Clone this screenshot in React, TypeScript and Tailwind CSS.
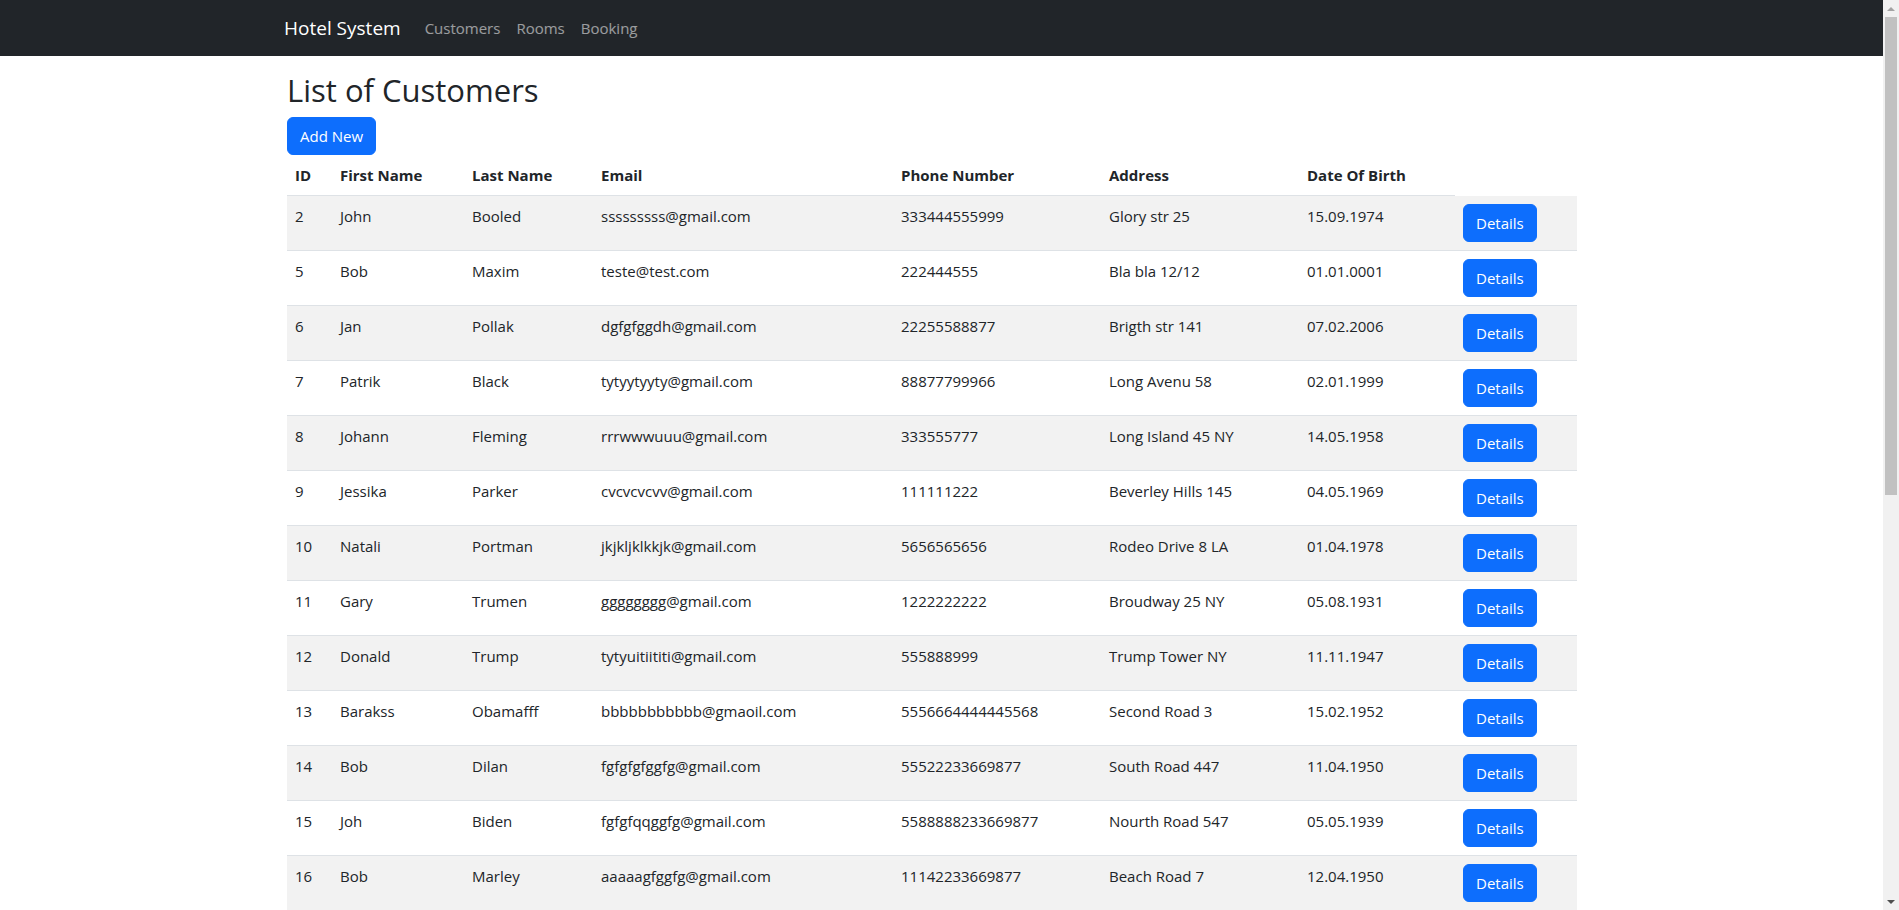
import React from 'react'

type Customer = {
  id: number
  firstName: string
  lastName: string
  email: string
  phone: string
  address: string
  dob: string
}

const customers: Customer[] = [
  { id: 2, firstName: 'John', lastName: 'Booled', email: 'sssssssss@gmail.com', phone: '333444555999', address: 'Glory str 25', dob: '15.09.1974' },
  { id: 5, firstName: 'Bob', lastName: 'Maxim', email: 'teste@test.com', phone: '222444555', address: 'Bla bla 12/12', dob: '01.01.0001' },
  { id: 6, firstName: 'Jan', lastName: 'Pollak', email: 'dgfgfggdh@gmail.com', phone: '22255588877', address: 'Brigth str 141', dob: '07.02.2006' },
  { id: 7, firstName: 'Patrik', lastName: 'Black', email: 'tytyytyyty@gmail.com', phone: '88877799966', address: 'Long Avenu 58', dob: '02.01.1999' },
  { id: 8, firstName: 'Johann', lastName: 'Fleming', email: 'rrrwwwuuu@gmail.com', phone: '333555777', address: 'Long Island 45 NY', dob: '14.05.1958' },
  { id: 9, firstName: 'Jessika', lastName: 'Parker', email: 'cvcvcvcvv@gmail.com', phone: '111111222', address: 'Beverley Hills 145', dob: '04.05.1969' },
  { id: 10, firstName: 'Natali', lastName: 'Portman', email: 'jkjkljklkkjk@gmail.com', phone: '5656565656', address: 'Rodeo Drive 8 LA', dob: '01.04.1978' },
  { id: 11, firstName: 'Gary', lastName: 'Trumen', email: 'gggggggg@gmail.com', phone: '1222222222', address: 'Broudway 25 NY', dob: '05.08.1931' },
  { id: 12, firstName: 'Donald', lastName: 'Trump', email: 'tytyuitiititi@gmail.com', phone: '555888999', address: 'Trump Tower NY', dob: '11.11.1947' },
  { id: 13, firstName: 'Barakss', lastName: 'Obamafff', email: 'bbbbbbbbbbb@gmaoil.com', phone: '5556664444445568', address: 'Second Road 3', dob: '15.02.1952' },
  { id: 14, firstName: 'Bob', lastName: 'Dilan', email: 'fgfgfgfggfg@gmail.com', phone: '55522233669877', address: 'South Road 447', dob: '11.04.1950' },
  { id: 15, firstName: 'Joh', lastName: 'Biden', email: 'fgfgfqqggfg@gmail.com', phone: '5588888233669877', address: 'Nourth Road 547', dob: '05.05.1939' },
  { id: 16, firstName: 'Bob', lastName: 'Marley', email: 'aaaaagfggfg@gmail.com', phone: '11142233669877', address: 'Beach Road 7', dob: '12.04.1950' },
]

const headers = ['ID', 'First Name', 'Last Name', 'Email', 'Phone Number', 'Address', 'Date Of Birth']

function Scrollbar() {
  return (
    <div className="w-[16px] shrink-0 bg-[#f1f1f1] flex flex-col items-center">
      <div className="h-[17px] flex items-center justify-center">
        <div className="w-0 h-0 border-l-[4px] border-r-[4px] border-b-[4px] border-l-transparent border-r-transparent border-b-[#a3a3a3]" />
      </div>
      <div className="w-[12px] h-[478px] bg-[#c1c1c1]" />
      <div className="flex-1" />
      <div className="h-[17px] flex items-center justify-center">
        <div className="w-0 h-0 border-l-[4px] border-r-[4px] border-t-[4px] border-l-transparent border-r-transparent border-t-[#505050]" />
      </div>
    </div>
  )
}

export default function App() {
  return (
    <div className="h-[910px] overflow-hidden flex bg-white text-[#212529] font-['Segoe_UI','Open_Sans',sans-serif] text-[15px] leading-6">
      <div className="flex-1 min-w-0">
        {/* Navbar */}
        <nav className="h-[56px] bg-[#212529] flex items-center">
          <div className="pl-[284px] flex items-center">
            <span className="text-[19px] leading-[30px] text-white mr-4">Hotel System</span>
            <div className="flex items-center">
              {['Customers', 'Rooms', 'Booking'].map(l => (
                <a key={l} className="px-2 py-2 text-white/55">{l}</a>
              ))}
            </div>
          </div>
        </nav>

        <main className="pl-[287px] pt-[15px]">
          <h2 className="text-[31px] leading-[38px] font-medium mb-2">List of Customers</h2>
          <button className="h-[38px] px-3 rounded-md bg-[#0d6efd] text-white border border-[#0d6efd]">Add New</button>

          <table className="table-fixed border-collapse w-[1290px]">
            <colgroup>
              <col className="w-[45px]" />
              <col className="w-[132px]" />
              <col className="w-[129px]" />
              <col className="w-[300px]" />
              <col className="w-[208px]" />
              <col className="w-[198px]" />
              <col className="w-[156px]" />
              <col className="w-[122px]" />
            </colgroup>
            <thead>
              <tr>
                {headers.map(h => (
                  <th key={h} className="text-left align-top font-bold p-2 border-b border-[#dee2e6]">{h}</th>
                ))}
              </tr>
            </thead>
            <tbody>
              {customers.map((c, i) => (
                <tr key={c.id} className={i % 2 === 0 ? 'bg-[#f2f2f2]' : 'bg-white'}>
                  <td className="align-top p-2 border-b border-[#dee2e6]">{c.id}</td>
                  <td className="align-top p-2 border-b border-[#dee2e6]">{c.firstName}</td>
                  <td className="align-top p-2 border-b border-[#dee2e6]">{c.lastName}</td>
                  <td className="align-top p-2 border-b border-[#dee2e6]">{c.email}</td>
                  <td className="align-top p-2 border-b border-[#dee2e6]">{c.phone}</td>
                  <td className="align-top p-2 border-b border-[#dee2e6]">{c.address}</td>
                  <td className="align-top p-2 border-b border-[#dee2e6]">{c.dob}</td>
                  <td className="align-top p-2 border-b border-[#dee2e6]">
                    <button className="h-[38px] px-3 rounded-md bg-[#0d6efd] text-white border border-[#0d6efd]">Details</button>
                  </td>
                </tr>
              ))}
            </tbody>
          </table>
        </main>
      </div>
      <Scrollbar />
    </div>
  )
}
